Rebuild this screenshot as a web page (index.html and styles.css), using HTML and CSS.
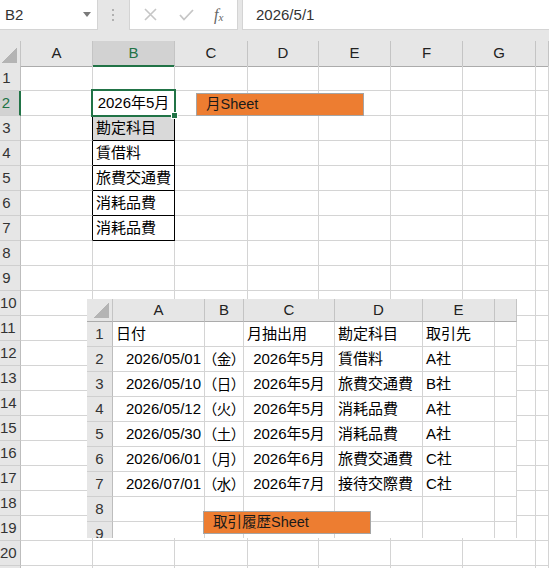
FILE: index.html
```html
<!DOCTYPE html>
<html lang="ja">
<head>
    <meta charset="UTF-8">
    <title>Book1 - Excel</title>
    <link rel="stylesheet" href="styles.css">
</head>
<body>
    <div class="topbar">
        <div class="namebox">
            <span>B2</span>
            <svg class="caret" width="8" height="5" viewBox="0 0 8 5"><path d="M0 0h8L4 5z" fill="#7a7a7a"/></svg>
        </div>
        <div class="grip">
            <svg width="3" height="13" viewBox="0 0 3 13"><rect x="0" y="0" width="2" height="2" fill="#b0b0b0"/><rect x="0" y="5" width="2" height="2" fill="#b0b0b0"/><rect x="0" y="10" width="2" height="2" fill="#b0b0b0"/></svg>
        </div>
        <div class="fbuttons">
            <svg width="13" height="13" viewBox="0 0 13 13"><path d="M1 1l11 11M12 1L1 12" stroke="#c6c6c6" stroke-width="1.6"/></svg>
            <svg width="15" height="12" viewBox="0 0 15 12"><path d="M1 6l4 4.5L14 1" stroke="#c6c6c6" stroke-width="1.8" fill="none"/></svg>
            <span class="fx">f<sub>x</sub></span>
        </div>
        <div class="finput">2026/5/1</div>
    </div>

    <div class="sheet">
        <div class="row head">
            <div class="corner"></div><div>A</div><div class="sel">B</div><div>C</div><div>D</div><div>E</div><div>F</div><div>G</div><div></div>
        </div>
        <div class="row"><div class="rh">1</div><div></div><div></div><div></div><div></div><div></div><div></div><div></div><div></div></div>
        <div class="row"><div class="rh sel">2</div><div class="edge"></div><div class="active">2026年5月</div><div></div><div></div><div></div><div></div><div></div><div></div></div>
        <div class="row"><div class="rh">3</div><div class="edge"></div><div class="box title">勘定科目</div><div></div><div></div><div></div><div></div><div></div><div></div></div>
        <div class="row"><div class="rh">4</div><div class="edge"></div><div class="box">賃借料</div><div></div><div></div><div></div><div></div><div></div><div></div></div>
        <div class="row"><div class="rh">5</div><div class="edge"></div><div class="box">旅費交通費</div><div></div><div></div><div></div><div></div><div></div><div></div></div>
        <div class="row"><div class="rh">6</div><div class="edge"></div><div class="box">消耗品費</div><div></div><div></div><div></div><div></div><div></div><div></div></div>
        <div class="row"><div class="rh">7</div><div class="edge"></div><div class="box">消耗品費</div><div></div><div></div><div></div><div></div><div></div><div></div></div>
        <div class="row"><div class="rh">8</div><div></div><div></div><div></div><div></div><div></div><div></div><div></div><div></div></div>
        <div class="row"><div class="rh">9</div><div></div><div></div><div></div><div></div><div></div><div></div><div></div><div></div></div>
        <div class="row"><div class="rh">10</div><div></div><div></div><div></div><div></div><div></div><div></div><div></div><div></div></div>
        <div class="row"><div class="rh">11</div><div></div><div></div><div></div><div></div><div></div><div></div><div></div><div></div></div>
        <div class="row"><div class="rh">12</div><div></div><div></div><div></div><div></div><div></div><div></div><div></div><div></div></div>
        <div class="row"><div class="rh">13</div><div></div><div></div><div></div><div></div><div></div><div></div><div></div><div></div></div>
        <div class="row"><div class="rh">14</div><div></div><div></div><div></div><div></div><div></div><div></div><div></div><div></div></div>
        <div class="row"><div class="rh">15</div><div></div><div></div><div></div><div></div><div></div><div></div><div></div><div></div></div>
        <div class="row"><div class="rh">16</div><div></div><div></div><div></div><div></div><div></div><div></div><div></div><div></div></div>
        <div class="row"><div class="rh">17</div><div></div><div></div><div></div><div></div><div></div><div></div><div></div><div></div></div>
        <div class="row"><div class="rh">18</div><div></div><div></div><div></div><div></div><div></div><div></div><div></div><div></div></div>
        <div class="row"><div class="rh">19</div><div></div><div></div><div></div><div></div><div></div><div></div><div></div><div></div></div>
        <div class="row"><div class="rh">20</div><div></div><div></div><div></div><div></div><div></div><div></div><div></div><div></div></div>
        <div class="row"><div class="rh">21</div><div></div><div></div><div></div><div></div><div></div><div></div><div></div><div></div></div>
    </div>

    <!-- shape on the monthly sheet -->
    <div class="shape month">月Sheet</div>

    <!-- pasted picture of the history sheet -->
    <div class="pasted">
        <div class="row head">
            <div class="corner"></div><div>A</div><div>B</div><div>C</div><div>D</div><div>E</div><div></div>
        </div>
        <div class="row"><div class="rh">1</div><div>日付</div><div></div><div>月抽出用</div><div>勘定科目</div><div>取引先</div><div></div></div>
        <div class="row"><div class="rh">2</div><div class="num">2026/05/01</div><div class="wd">（金）</div><div class="mid">2026年5月</div><div>賃借料</div><div>A社</div><div></div></div>
        <div class="row"><div class="rh">3</div><div class="num">2026/05/10</div><div class="wd">（日）</div><div class="mid">2026年5月</div><div>旅費交通費</div><div>B社</div><div></div></div>
        <div class="row"><div class="rh">4</div><div class="num">2026/05/12</div><div class="wd">（火）</div><div class="mid">2026年5月</div><div>消耗品費</div><div>A社</div><div></div></div>
        <div class="row"><div class="rh">5</div><div class="num">2026/05/30</div><div class="wd">（土）</div><div class="mid">2026年5月</div><div>消耗品費</div><div>A社</div><div></div></div>
        <div class="row"><div class="rh">6</div><div class="num">2026/06/01</div><div class="wd">（月）</div><div class="mid">2026年6月</div><div>旅費交通費</div><div>C社</div><div></div></div>
        <div class="row"><div class="rh">7</div><div class="num">2026/07/01</div><div class="wd">（水）</div><div class="mid">2026年7月</div><div>接待交際費</div><div>C社</div><div></div></div>
        <div class="row"><div class="rh">8</div><div></div><div></div><div></div><div></div><div></div><div></div></div>
        <div class="row"><div class="rh">9</div><div></div><div></div><div></div><div></div><div></div><div></div></div>
    </div>

    <div class="shape history">取引履歴Sheet</div>
</body>
</html>
```

FILE: styles.css
```css
body {
    margin: 0;
    background-color: #fff;
    font-family: "Liberation Sans", "Noto Sans CJK JP", sans-serif;
    font-size: 15px;
    color: #000;
    overflow: hidden;
}

/* name box + formula bar */
.topbar {
    display: flex;
    align-items: flex-start;
    height: 41px;
    background-color: #e6e6e6;
}
.namebox {
    display: flex;
    align-items: center;
    justify-content: space-between;
    box-sizing: border-box;
    width: 98px;
    height: 30px;
    padding: 0 6px 0 5px;
    background-color: #fff;
    border: 1px solid #d4d4d4;
    border-top: none;
    border-left: none;
    color: #333;
}
.grip { width: 31px; height: 30px; display: flex; align-items: center; justify-content: center; }
.fbuttons {
    display: flex;
    align-items: center;
    box-sizing: border-box;
    width: 109px;
    height: 30px;
    padding: 0 0 0 14px;
    background-color: #fff;
    border: 1px solid #d4d4d4;
    border-top: none;
}
.fbuttons svg:nth-child(2) { margin-left: 22px; }
.fx {
    margin-left: 20px;
    font-family: "Liberation Serif", serif;
    font-style: italic;
    font-size: 16px;
    color: #666;
}
.fx sub { font-size: 11px; vertical-align: -1px; }
.finput {
    flex: 1;
    box-sizing: border-box;
    height: 30px;
    margin-left: 4px;
    padding-left: 13px;
    line-height: 29px;
    background-color: #fff;
    border-bottom: 1px solid #d4d4d4;
    border-left: 1px solid #d4d4d4;
    color: #333;
}

/* grid */
.row {
    display: grid;
    grid-template-columns: 21px 72px 82px 73px 71px 72px 72px 73px 1fr;
    height: 25px;
}
.row > div {
    box-sizing: border-box;
    border-right: 1px solid #d4d4d4;
    border-bottom: 1px solid #d4d4d4;
    padding: 0 3px;
    line-height: 24px;
    white-space: nowrap;
}
.head > div {
    background-color: #e6e6e6;
    border-right-color: #c4c4c4;
    border-bottom-color: #ababab;
    text-align: center;
    color: #222;
}
.head > .sel {
    background-color: #d2d2d2;
    border-bottom: 2px solid #217346;
    color: #217346;
}
.corner {
    background: linear-gradient(to bottom right, transparent 50%, #b4b4b4 50%) no-repeat right 3px bottom 3px / 15px 16px;
}
.row > .rh {
    padding: 0 7px 0 0;
    text-align: center;
    background-color: #e6e6e6;
    border-right-color: #bdbdbd;
    border-bottom-color: #cfcfcf;
    color: #333;
}
.row > .rh.sel {
    background-color: #d2d2d2;
    border-right: 2px solid #217346;
    color: #217346;
}

/* selected cell and the small bordered list */
.row > .edge { border-right-color: #000; }
.row > .active {
    position: relative;
    text-align: center;
    border-bottom-color: #000;
}
.active::before {
    content: "";
    position: absolute;
    left: -2px;
    top: -2px;
    right: -2px;
    bottom: -2px;
    border: 2px solid #217346;
}
.active::after {
    content: "";
    position: absolute;
    right: -4px;
    bottom: -4px;
    width: 5px;
    height: 5px;
    background-color: #217346;
    border: 1px solid #fff;
}
.row > .box { border-right-color: #000; border-bottom-color: #000; }
.row > .title { background-color: #d9d9d9; }

/* orange shapes */
.shape {
    position: absolute;
    box-sizing: border-box;
    width: 168px;
    height: 23px;
    padding-left: 9px;
    line-height: 21px;
    font-size: 14.5px;
    background-color: #ed7d31;
    border: 1px solid #a5a5a5;
    color: #1a1a1a;
}
.month { left: 196px; top: 93px; }
.history { left: 203px; top: 511px; }

/* pasted picture */
.pasted {
    position: absolute;
    left: 87px;
    top: 299px;
    width: 430px;
    height: 239px;
    overflow: hidden;
    background-color: #fff;
}
.pasted .row { grid-template-columns: 26px 92px 39px 91px 88px 72px 1fr; }
.pasted .head { height: 23px; }
.pasted .head > div { line-height: 22px; }
.pasted .row > .rh { padding: 0; }
.pasted .num { text-align: right; }
.pasted .mid { text-align: center; }
/* weekday column: fullwidth brackets set proportionally */
.pasted .row > .wd {
    padding: 0;
    text-align: center;
    font-family: "Noto Sans CJK JP", sans-serif;
    font-size: 14.5px;
    font-feature-settings: "palt" 1;
    font-kerning: normal;
}
```
